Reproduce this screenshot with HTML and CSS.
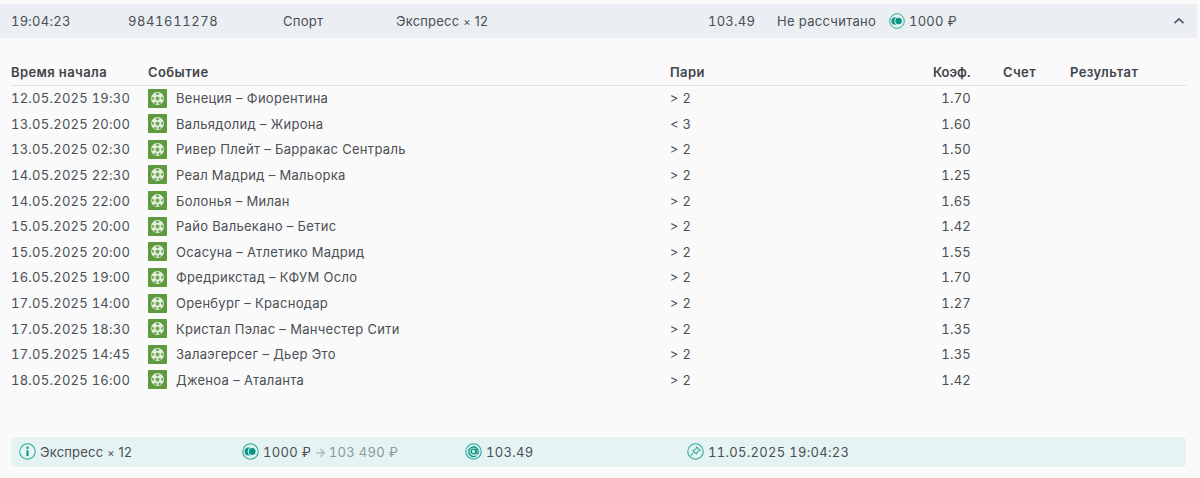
FILE: index.html
```html
<!DOCTYPE html>
<html lang="ru">
<head>
<meta charset="utf-8">
<title>Экспресс</title>
<link rel="stylesheet" href="styles.css">
</head>
<body>
<svg class="defs" width="0" height="0" aria-hidden="true">
  <symbol id="ball" viewBox="0 0 20 20">
    <rect width="20" height="20" rx="1" fill="#5f9a3f"/>
    <circle cx="10" cy="10" r="6.800" fill="#e6f0e0"/>
    <polygon points="10,7.600 12.300,9.300 11.400,12 8.600,12 7.700,9.300" fill="#74a95a"/>
    <path d="M10 3.600l2 1.300-.7 1.300H8.700L8 4.900zM16.200 8.600l-.3 2.600-1.500.2-.9-1.700 1.100-1.500zM3.800 8.600l.3 2.600 1.500.2.900-1.700-1.100-1.500zM6.200 15.300l2.300 1 .9-1.400-.9-1.400H6.800zM13.800 15.300l-2.300 1-.9-1.400.9-1.400h1.700z" fill="#74a95a"/>
  </symbol>
  <symbol id="coins" viewBox="0 0 16 16">
    <circle cx="8" cy="8" r="7.300" fill="#e3f3f1" stroke="#2eaa9b" stroke-width="1"/>
    <circle cx="6.200" cy="8" r="3.800" fill="#0c9586"/>
    <circle cx="9.400" cy="8" r="4" fill="#e3f3f1"/>
    <circle cx="9.600" cy="8" r="3.200" fill="#0c9586"/>
  </symbol>
</svg>

<section class="bet">
  <header class="summary">
    <span class="nums">19:04:23</span>
    <span class="nums id">9841611278</span>
    <span class="word">Спорт</span>
    <span class="type">Экспресс <small>×</small> 12</span>
    <span class="nums">103.49</span>
    <span class="word">Не рассчитано</span>
    <span class="stake"><svg class="ic-coins"><use href="#coins"/></svg><span class="nums">1000 ₽</span></span>
    <svg class="chevron" viewBox="0 0 12 8"><path d="M1.500 6.200 6 2l4.500 4.200" fill="none" stroke="#4b5563" stroke-width="1.700"/></svg>
  </header>

  <table class="events">
    <thead>
      <tr><th class="c-time">Время начала</th><th class="c-event">Событие</th><th class="c-pick">Пари</th><th class="c-coef">Коэф.</th><th class="c-score">Счет</th><th class="c-result">Результат</th></tr>
    </thead>
    <tbody>
      <tr><td class="nums">12.05.2025 19:30</td><td><span class="ev"><svg class="ic-ball"><use href="#ball"/></svg>Венеция – Фиорентина</span></td><td class="nums">&gt; 2</td><td class="nums num">1.70</td><td></td><td></td></tr>
      <tr><td class="nums">13.05.2025 20:00</td><td><span class="ev"><svg class="ic-ball"><use href="#ball"/></svg>Вальядолид – Жирона</span></td><td class="nums">&lt; 3</td><td class="nums num">1.60</td><td></td><td></td></tr>
      <tr><td class="nums">13.05.2025 02:30</td><td><span class="ev"><svg class="ic-ball"><use href="#ball"/></svg>Ривер Плейт – Барракас Сентраль</span></td><td class="nums">&gt; 2</td><td class="nums num">1.50</td><td></td><td></td></tr>
      <tr><td class="nums">14.05.2025 22:30</td><td><span class="ev"><svg class="ic-ball"><use href="#ball"/></svg>Реал Мадрид – Мальорка</span></td><td class="nums">&gt; 2</td><td class="nums num">1.25</td><td></td><td></td></tr>
      <tr><td class="nums">14.05.2025 22:00</td><td><span class="ev"><svg class="ic-ball"><use href="#ball"/></svg>Болонья – Милан</span></td><td class="nums">&gt; 2</td><td class="nums num">1.65</td><td></td><td></td></tr>
      <tr><td class="nums">15.05.2025 20:00</td><td><span class="ev"><svg class="ic-ball"><use href="#ball"/></svg>Райо Вальекано – Бетис</span></td><td class="nums">&gt; 2</td><td class="nums num">1.42</td><td></td><td></td></tr>
      <tr><td class="nums">15.05.2025 20:00</td><td><span class="ev"><svg class="ic-ball"><use href="#ball"/></svg>Осасуна – Атлетико Мадрид</span></td><td class="nums">&gt; 2</td><td class="nums num">1.55</td><td></td><td></td></tr>
      <tr><td class="nums">16.05.2025 19:00</td><td><span class="ev"><svg class="ic-ball"><use href="#ball"/></svg>Фредрикстад – КФУМ Осло</span></td><td class="nums">&gt; 2</td><td class="nums num">1.70</td><td></td><td></td></tr>
      <tr><td class="nums">17.05.2025 14:00</td><td><span class="ev"><svg class="ic-ball"><use href="#ball"/></svg>Оренбург – Краснодар</span></td><td class="nums">&gt; 2</td><td class="nums num">1.27</td><td></td><td></td></tr>
      <tr><td class="nums">17.05.2025 18:30</td><td><span class="ev"><svg class="ic-ball"><use href="#ball"/></svg>Кристал Пэлас – Манчестер Сити</span></td><td class="nums">&gt; 2</td><td class="nums num">1.35</td><td></td><td></td></tr>
      <tr><td class="nums">17.05.2025 14:45</td><td><span class="ev"><svg class="ic-ball"><use href="#ball"/></svg>Залаэгерсег – Дьер Это</span></td><td class="nums">&gt; 2</td><td class="nums num">1.35</td><td></td><td></td></tr>
      <tr><td class="nums">18.05.2025 16:00</td><td><span class="ev"><svg class="ic-ball"><use href="#ball"/></svg>Дженоа – Аталанта</span></td><td class="nums">&gt; 2</td><td class="nums num">1.42</td><td></td><td></td></tr>
    </tbody>
  </table>

  <footer class="totals">
    <span class="item"><svg class="ic" viewBox="0 0 16 16"><circle cx="8" cy="8" r="7.300" fill="none" stroke="#2eaa9b"/><circle cx="8" cy="4.500" r="1.100" fill="#0c9586"/><rect x="7" y="6.800" width="2" height="5.500" fill="#0c9586"/></svg><span class="type">Экспресс <small>×</small> 12</span></span>
    <span class="item"><svg class="ic"><use href="#coins"/></svg><span class="nums big">1000 ₽</span><span class="arrow">→</span><span class="nums big win">103 490 ₽</span></span>
    <span class="item"><svg class="ic" viewBox="0 0 16 16"><circle cx="8" cy="8" r="7.300" fill="#d5efec" stroke="#2eaa9b"/><circle cx="8" cy="8" r="2.200" fill="none" stroke="#0c9586" stroke-width="1.300"/><path d="M10.200 5.800v3.300c0 1.500 2.300 1.500 2.300-.7A4.500 4.500 0 1 0 10.500 12" fill="none" stroke="#0c9586" stroke-width="1.300"/></svg><span class="nums big">103.49</span></span>
    <span class="item"><svg class="ic" viewBox="0 0 16 16" fill="none" stroke="#2eaa9b"><circle cx="8" cy="8" r="7.300"/><path d="M9 3.800l3.300 3.200-1.900.6-1.600 2.600-3.100-3 2.700-1.600zM6.200 8.700 3.800 12"/></svg><span class="nums big">11.05.2025 19:04:23</span></span>
  </footer>
</section>
</body>
</html>
```
FILE: styles.css
```css
* { box-sizing: border-box; }
html, body { margin: 0; padding: 0; }
body {
  width: 1200px;
  height: 478px;
  overflow: hidden;
  background: #fafafa;
  color: #4a4f55;
  font-family: "Inter", "Noto Sans", "Liberation Sans", sans-serif;
  font-size: 13px;
  letter-spacing: 0.3px;
}
.defs { position: absolute; }
.bet { padding-top: 4px; }

.nums { font-variant-numeric: tabular-nums; letter-spacing: 0.25px; }
.big { letter-spacing: 0.3px; }
.id { letter-spacing: 0.6px; }
.type { letter-spacing: 0.2px; }
.type small { font-size: 11px; }

.summary {
  display: grid;
  grid-template-columns: 117px 155px 113px 312px 69px 112px 1fr 16px;
  align-items: center;
  width: 1197px;
  height: 34px;
  padding: 0 12px 0 11px;
  background: #ebeef3;
}
.stake { display: flex; align-items: center; gap: 4px; }
.ic-coins { width: 16px; height: 16px; }
.chevron { width: 12px; height: 8px; justify-self: end; }

.events {
  table-layout: fixed;
  border-collapse: collapse;
  width: 1175px;
  margin: 21px 0 0 11px;
}
.events th {
  height: 26px;
  padding: 0;
  text-align: left;
  font-weight: 600;
  color: #3f444a;
  border-bottom: 1px solid #dfe1e4;
  letter-spacing: 0.4px;
}
.c-time { width: 137px; }
.c-event { width: 522px; }
.c-pick { width: 200px; }
.c-coef { width: 101px; }
.c-score { width: 99px; }
.events th.c-coef { text-align: right; letter-spacing: 0; }
.events th.c-score { padding-left: 32px; }
.events td { height: 25.640px; padding: 0.600px 0 0; white-space: nowrap; }
.events td.num { text-align: right; }
.ev { display: flex; align-items: center; gap: 9px; }
.ic-ball { width: 19px; height: 19px; flex: none; }

.totals {
  display: grid;
  grid-template-columns: 223px 223px 222px 1fr;
  align-items: center;
  width: 1175px;
  height: 30px;
  margin: 44px 0 0 11px;
  padding-left: 8px;
  background: #e5f4f3;
  border-radius: 4px;
}
.item { display: flex; align-items: center; gap: 4px; }
.ic { width: 17px; height: 17px; flex: none; }
.win { color: #8b9a9c; }
.arrow { color: #a9c4c3; font-weight: 700; margin: 0 -2px 0 -1px; }
```
